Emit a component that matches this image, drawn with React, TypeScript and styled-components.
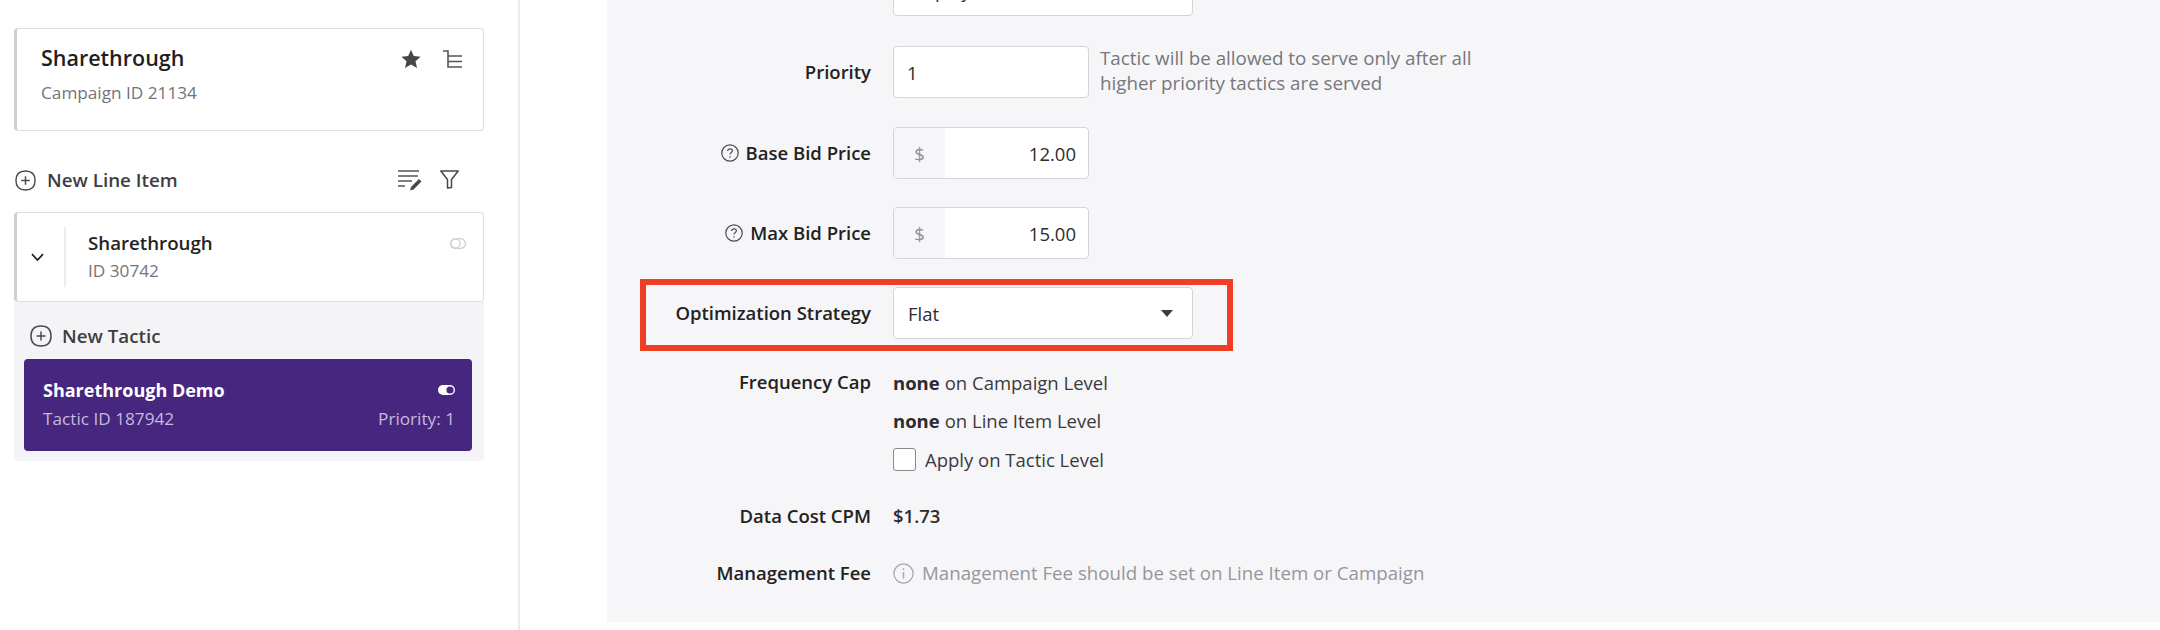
import { createGlobalStyle, styled } from "styled-components";

const GlobalStyle = createGlobalStyle`
  html, body {
    margin: 0;
    padding: 0;
    background: #fff;
  }
  body {
    font-family: "Open Sans", "Liberation Sans", sans-serif;
    color: #222;
  }
  * {
    box-sizing: border-box;
  }
`;

const Page = styled.div`
  display: flex;
  width: 2160px;
  height: 630px;
  overflow: hidden;
  background: #fff;
`;

const Sidebar = styled.aside`
  width: 520px;
  flex-shrink: 0;
  padding: 28px 34px 0 14px;
  border-right: 2px solid #ececf0;
`;

const Card = styled.div`
  display: flex;
  background: #fff;
  border: 1px solid #dedee3;
  border-left: 3px solid #cfcfd4;
  border-radius: 4px;
`;

const CampaignCard = styled(Card)`
  height: 103px;
  justify-content: space-between;
  padding: 15px 21px 0 24px;
`;

const CampaignTitle = styled.div`
  font-size: 21.5px;
  line-height: 28px;
  font-weight: 600;
  color: #1f1f22;
`;

const MutedLine = styled.div`
  font-size: 17.2px;
  line-height: 24px;
  color: #74747a;
`;

const CampaignId = styled(MutedLine)`
  margin-top: 9px;
`;

const IconRow = styled.div<{ $gap: number }>`
  display: flex;
  align-items: flex-start;
  gap: ${(props) => props.$gap}px;
  color: #48484c;
`;

const IconSlot = styled.span<{ $top: number }>`
  display: flex;
  margin-top: ${(props) => props.$top}px;
`;

const ActionRow = styled.div<{ $left: number }>`
  display: flex;
  align-items: center;
  justify-content: space-between;
  height: 24px;
  padding-left: ${(props) => props.$left}px;
`;

const LineActions = styled(ActionRow)`
  margin-top: 37px;
  margin-bottom: 20px;
  padding-right: 25px;
`;

const AddButton = styled.div<{ $gap: number }>`
  display: flex;
  align-items: center;
  gap: ${(props) => props.$gap}px;
  font-size: 18.8px;
  font-weight: 600;
  color: #3e3e42;
`;

const LineCard = styled(Card)`
  height: 90px;
  align-items: center;
  padding-right: 17px;
`;

const ChevronCell = styled.div`
  display: flex;
  align-items: center;
  justify-content: center;
  width: 49px;
  height: 60px;
  padding-right: 6px;
  border-right: 2px solid #ececf0;
  flex-shrink: 0;
  color: #222;
`;

const LineBody = styled.div`
  flex: 1;
  padding-left: 22px;
  margin-top: -2px;
`;

const LineTitle = styled.div`
  font-size: 18.7px;
  line-height: 26px;
  font-weight: 600;
  color: #222;
`;

const LineId = styled(MutedLine)`
  margin-top: 3px;
`;

const ToggleSlot = styled.div`
  align-self: flex-start;
  margin-top: 25px;
  display: flex;
`;

const TacticArea = styled.div`
  background: #f4f4f6;
  border-radius: 0 0 4px 4px;
  padding: 22px 12px 10px 10px;
`;

const TacticActions = styled(ActionRow)`
  margin-bottom: 11px;
`;

const TacticCard = styled.div`
  height: 92px;
  background: #46267f;
  border-radius: 4px;
  padding: 17px 17px 0 19px;
  color: #fff;
`;

const TacticLine = styled.div`
  display: flex;
  align-items: center;
  justify-content: space-between;
`;

const TacticTitle = styled.div`
  font-size: 18px;
  line-height: 28px;
  font-weight: 700;
`;

const TacticMeta = styled.div`
  font-size: 17.2px;
  line-height: 24px;
  color: #c6badd;
  margin-top: 3px;
`;

const Main = styled.main`
  margin-left: 87px;
  flex: 1;
  height: 622px;
  background: #f6f5f8;
  overflow: hidden;
`;

// the form is scrolled: the first select is cut by the top of the window
const Form = styled.div`
  display: flex;
  flex-direction: column;
  margin-top: -36px;
`;

const Row = styled.div<{ $top: number; $align?: string }>`
  position: relative;
  display: grid;
  grid-template-columns: 264px 1fr;
  column-gap: 22px;
  align-items: ${(props) => props.$align ?? "center"};
  margin-top: ${(props) => props.$top}px;
`;

const Label = styled.div`
  display: flex;
  align-items: center;
  justify-content: flex-end;
  gap: 7px;
  font-size: 18.5px;
  line-height: 24px;
  font-weight: 600;
  color: #222;
`;

const Control = styled.div`
  display: flex;
  align-items: center;
  gap: 11px;
`;

const Field = styled.div<{ $width: number }>`
  display: flex;
  align-items: center;
  width: ${(props) => props.$width}px;
  height: 52px;
  background: #fff;
  border: 1px solid #d4d4d9;
  border-radius: 4px;
  font-size: 18.5px;
  color: #2c2c30;
  overflow: hidden;
`;

const SelectField = styled(Field)`
  justify-content: space-between;
  padding: 0 19px 0 14px;
`;

const TextValue = styled.span`
  padding-left: 13px;
`;

const Prefix = styled.span`
  display: flex;
  align-items: center;
  justify-content: center;
  width: 51px;
  height: 100%;
  background: #f6f6f8;
  color: #8f8f94;
  flex-shrink: 0;
`;

const Amount = styled.span`
  flex: 1;
  text-align: right;
  padding-right: 12px;
`;

const Caret = styled.span`
  width: 0;
  height: 0;
  border-left: 6.5px solid transparent;
  border-right: 6.5px solid transparent;
  border-top: 7px solid #3c3c40;
`;

const Hint = styled.div`
  font-size: 18.8px;
  line-height: 25px;
  white-space: nowrap;
  color: #77777c;
  margin-top: -3px;
`;

const Highlight = styled.div`
  position: absolute;
  top: -8px;
  left: 33px;
  width: 593px;
  height: 72px;
  border: 6px solid #ee3f24;
  pointer-events: none;
`;

const CapStack = styled.div`
  display: flex;
  flex-direction: column;
`;

const CapLine = styled.div<{ $top?: number }>`
  display: flex;
  align-items: center;
  height: 24px;
  margin-top: ${(props) => props.$top ?? 0}px;
  font-size: 18.5px;
  color: #3a3a3e;
`;

const Strong = styled.strong`
  font-weight: 700;
  color: #2c2c30;
  margin-right: 5px;
`;

const CheckBox = styled.span`
  width: 23px;
  height: 23px;
  background: #fff;
  border: 1px solid #88888c;
  border-radius: 3px;
  margin-right: 9px;
`;

const Value = styled.div`
  font-size: 18.5px;
  line-height: 24px;
  font-weight: 600;
  color: #2c2c30;
`;

const InfoNote = styled.div`
  display: flex;
  align-items: center;
  gap: 8px;
  font-size: 18.7px;
  line-height: 24px;
  color: #96969b;
`;

function PlusIcon({ size }: { size: number }) {
  return (
    <svg width={size} height={size} viewBox="0 0 22 22" fill="none" stroke="#4a4a4e" strokeWidth="1.5">
      <path d="M11 1C17.5 1 21 4.5 21 11C21 17.5 17.5 21 11 21C4.5 21 1 17.5 1 11C1 4.5 4.5 1 11 1Z" />
      <path d="M11 6.5V15.5M6.5 11H15.5" />
    </svg>
  );
}

function StarIcon() {
  return (
    <svg width="20" height="20" viewBox="0 0 20 20" fill="#48484c">
      <path d="M10 .8l2.8 6.2 6.8.7-5.1 4.5 1.5 6.7L10 15.4l-6 3.5 1.5-6.7L.4 7.7l6.8-.7z" />
    </svg>
  );
}

function TreeIcon() {
  return (
    <svg width="19" height="18" viewBox="0 0 19 18" fill="none" stroke="#55555a" strokeWidth="1.6">
      <path d="M0 1H5V17H19M5 6H19M5 11.5H19" />
    </svg>
  );
}

function EditListIcon() {
  return (
    <svg width="24" height="21" viewBox="0 0 24 21" fill="none" stroke="#55555a" strokeWidth="1.5">
      <path d="M0 1H21M0 6H20M0 11H14M0 16H7" />
      <path d="M12 20.5l1-3.5L21 9l2.5 2.5-8 8z" fill="#48484c" stroke="none" />
    </svg>
  );
}

function FunnelIcon() {
  return (
    <svg width="19" height="19" viewBox="0 0 19 19" fill="none" stroke="#48484c" strokeWidth="1.5" strokeLinejoin="round">
      <path d="M.8 1H18.2L11.5 9.5V17.5L7.5 18V9.5Z" />
    </svg>
  );
}

function ChevronIcon() {
  return (
    <svg width="13" height="9" viewBox="0 0 13 9" fill="none" stroke="#222" strokeWidth="1.8">
      <path d="M1 1.2L6.5 7L12 1.2" />
    </svg>
  );
}

function OffToggle() {
  return (
    <svg width="16" height="11" viewBox="0 0 16 11" fill="none" stroke="#cfcfd4" strokeWidth="1.2">
      <rect x=".6" y=".6" width="14.8" height="9.8" rx="4.9" />
      <circle cx="5.5" cy="5.5" r="4.6" />
    </svg>
  );
}

function OnToggle() {
  return (
    <svg width="17" height="10" viewBox="0 0 17 10">
      <rect width="17" height="10" rx="5" fill="#fff" />
      <circle cx="12" cy="5" r="3.6" fill="#46267f" />
    </svg>
  );
}

function QuestionIcon() {
  return (
    <svg width="18" height="18" viewBox="0 0 18 18" fill="none" stroke="#4c4c50" strokeWidth="1.2">
      <circle cx="9" cy="9" r="8.2" />
      <path d="M6.6 7C6.6 5.6 7.7 4.8 9 4.8C10.4 4.8 11.4 5.6 11.4 6.8C11.4 8.4 9 8.5 9 10.6" />
      <circle cx="9" cy="13" r=".8" fill="#4c4c50" stroke="none" />
    </svg>
  );
}

function InfoIcon() {
  return (
    <svg width="21" height="21" viewBox="0 0 21 21" fill="none" stroke="#a5a5aa" strokeWidth="1.2">
      <circle cx="10.5" cy="10.5" r="9.6" />
      <path d="M10.5 9V15.5" strokeWidth="1.4" />
      <circle cx="10.5" cy="6.2" r=".9" fill="#a5a5aa" stroke="none" />
    </svg>
  );
}

export default function App() {
  return (
    <Page>
      <GlobalStyle />
      <Sidebar>
        <CampaignCard>
          <div>
            <CampaignTitle>Sharethrough</CampaignTitle>
            <CampaignId>Campaign ID 21134</CampaignId>
          </div>
          <IconRow $gap={22}>
            <IconSlot $top={5}>
              <StarIcon />
            </IconSlot>
            <IconSlot $top={6}>
              <TreeIcon />
            </IconSlot>
          </IconRow>
        </CampaignCard>

        <LineActions $left={1}>
          <AddButton $gap={11}>
            <PlusIcon size={21} />
            New Line Item
          </AddButton>
          <IconRow $gap={18}>
            <EditListIcon />
            <FunnelIcon />
          </IconRow>
        </LineActions>

        <LineCard>
          <ChevronCell>
            <ChevronIcon />
          </ChevronCell>
          <LineBody>
            <LineTitle>Sharethrough</LineTitle>
            <LineId>ID 30742</LineId>
          </LineBody>
          <ToggleSlot>
            <OffToggle />
          </ToggleSlot>
        </LineCard>

        <TacticArea>
          <TacticActions $left={6}>
            <AddButton $gap={10}>
              <PlusIcon size={22} />
              New Tactic
            </AddButton>
          </TacticActions>
          <TacticCard>
            <TacticLine>
              <TacticTitle>Sharethrough Demo</TacticTitle>
              <OnToggle />
            </TacticLine>
            <TacticLine>
              <TacticMeta>Tactic ID 187942</TacticMeta>
              <TacticMeta>Priority: 1</TacticMeta>
            </TacticLine>
          </TacticCard>
        </TacticArea>
      </Sidebar>

      <Main>
        <Form>
          <Row $top={0}>
            <span />
            <SelectField $width={300}>
              <span>Display</span>
              <Caret />
            </SelectField>
          </Row>

          <Row $top={30}>
            <Label>Priority</Label>
            <Control>
              <Field $width={196}>
                <TextValue>1</TextValue>
              </Field>
              <Hint>
                Tactic will be allowed to serve only after all
                <br />
                higher priority tactics are served
              </Hint>
            </Control>
          </Row>

          <Row $top={29}>
            <Label>
              <QuestionIcon />
              Base Bid Price
            </Label>
            <Field $width={196}>
              <Prefix>$</Prefix>
              <Amount>12.00</Amount>
            </Field>
          </Row>

          <Row $top={28}>
            <Label>
              <QuestionIcon />
              Max Bid Price
            </Label>
            <Field $width={196}>
              <Prefix>$</Prefix>
              <Amount>15.00</Amount>
            </Field>
          </Row>

          <Row $top={28}>
            <Label>Optimization Strategy</Label>
            <SelectField $width={300}>
              <span>Flat</span>
              <Caret />
            </SelectField>
            <Highlight />
          </Row>

          <Row $top={31} $align="start">
            <Label>Frequency Cap</Label>
            <CapStack>
              <CapLine>
                <Strong>none</Strong> on Campaign Level
              </CapLine>
              <CapLine $top={14}>
                <Strong>none</Strong> on Line Item Level
              </CapLine>
              <CapLine $top={15}>
                <CheckBox />
                Apply on Tactic Level
              </CapLine>
            </CapStack>
          </Row>

          <Row $top={33}>
            <Label>Data Cost CPM</Label>
            <Value>$1.73</Value>
          </Row>

          <Row $top={33}>
            <Label>Management Fee</Label>
            <InfoNote>
              <InfoIcon />
              Management Fee should be set on Line Item or Campaign
            </InfoNote>
          </Row>
        </Form>
      </Main>
    </Page>
  );
}
